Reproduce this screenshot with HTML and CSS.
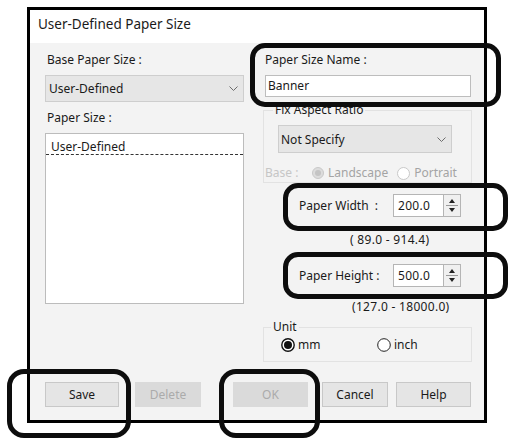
FILE: index.html
```html
<!DOCTYPE html>
<html>
    <head>
        <meta charset="UTF-8">
        <title>User-Defined Paper Size</title>
        <link rel="stylesheet" href="styles.css">
    </head>
    <body>
        <div class="page">
            <div class="dialog">
                <div class="titlebar">User-Defined Paper Size</div>
                <div class="content">
                    <div class="col-left">
                        <div class="label">Base Paper Size :</div>
                        <div class="select select-base">
                            <span>User-Defined</span>
                            <svg class="chevron" width="9" height="5" viewBox="0 0 9 5"><polyline points="0.5,0.5 4.5,4.5 8.5,0.5" fill="none" stroke="#6d6d6d" stroke-width="1"/></svg>
                        </div>
                        <div class="label label-gap">Paper Size :</div>
                        <div class="listbox">
                            <div class="list-item">User-Defined</div>
                        </div>
                    </div>
                    <div class="col-right">
                        <div class="label indent">Paper Size Name :</div>
                        <div class="textbox">Banner</div>
                        <div class="group group-aspect">
                            <div class="group-title">Fix Aspect Ratio</div>
                            <div class="select select-aspect">
                                <span>Not Specify</span>
                                <svg class="chevron" width="9" height="5" viewBox="0 0 9 5"><polyline points="0.5,0.5 4.5,4.5 8.5,0.5" fill="none" stroke="#6d6d6d" stroke-width="1"/></svg>
                            </div>
                            <div class="base-row">
                                <span class="base-label">Base :</span>
                                <span class="radio-opt opt-landscape">
                                    <svg width="12" height="12" viewBox="0 0 12 12"><circle cx="6" cy="6" r="5.5" fill="#dcdcdc" stroke="#c8c8c8"/><circle cx="6" cy="6" r="3" fill="#c4c4c4"/></svg>
                                    Landscape
                                </span>
                                <span class="radio-opt">
                                    <svg width="13" height="13" viewBox="0 0 13 13"><circle cx="6.5" cy="6.5" r="6" fill="#fff" stroke="#c8c8c8"/></svg>
                                    Portrait
                                </span>
                            </div>
                        </div>
                        <div class="size-row size-width">
                            <span class="size-label">Paper Width&nbsp; :</span>
                            <span class="spin-value">200.0</span>
                            <span class="spin-btn">
                                <svg width="18" height="23" viewBox="0 0 18 23"><polygon points="6,9 12,9 9,5" fill="#222"/><line x1="3" y1="11.5" x2="15" y2="11.5" stroke="#9a9a9a"/><polygon points="6,14 12,14 9,18" fill="#222"/></svg>
                            </span>
                        </div>
                        <div class="range range-width">( 89.0 - 914.4)</div>
                        <div class="size-row size-height">
                            <span class="size-label">Paper Height :</span>
                            <span class="spin-value">500.0</span>
                            <span class="spin-btn">
                                <svg width="18" height="23" viewBox="0 0 18 23"><polygon points="6,9 12,9 9,5" fill="#222"/><line x1="3" y1="11.5" x2="15" y2="11.5" stroke="#9a9a9a"/><polygon points="6,14 12,14 9,18" fill="#222"/></svg>
                            </span>
                        </div>
                        <div class="range range-height">(127.0 - 18000.0)</div>
                        <div class="group group-unit">
                            <div class="group-title">Unit</div>
                            <div class="unit-row">
                                <span class="radio-opt unit-mm">
                                    <svg width="14" height="14" viewBox="0 0 14 14"><circle cx="7" cy="7" r="6.2" fill="#fff" stroke="#111" stroke-width="1.4"/><circle cx="7" cy="7" r="4" fill="#111"/></svg>
                                    mm
                                </span>
                                <span class="radio-opt unit-inch">
                                    <svg width="14" height="14" viewBox="0 0 14 14"><circle cx="7" cy="7" r="6.3" fill="#fff" stroke="#222" stroke-width="1"/></svg>
                                    inch
                                </span>
                            </div>
                        </div>
                    </div>
                </div>
                <div class="buttons">
                    <span class="btn btn-save">Save</span>
                    <span class="btn btn-delete disabled">Delete</span>
                    <span class="btn btn-ok disabled">OK</span>
                    <span class="btn btn-cancel">Cancel</span>
                    <span class="btn btn-help">Help</span>
                </div>
            </div>
            <div class="mark mark-name"></div>
            <div class="mark mark-width"></div>
            <div class="mark mark-height"></div>
            <div class="mark mark-save"></div>
            <div class="mark mark-ok"></div>
        </div>
    </body>
</html>
```

FILE: styles.css
```css
body {
    margin : 0;
    background : #fff;
    font-family : "Noto Sans", "Open Sans", sans-serif;
    font-size : 12px;
    color : #1a1a1a;
}
.page {
    position : relative;
    width : 509px;
    height : 443px;
    padding : 7px 0 0 27px;
    box-sizing : border-box;
}
.dialog {
    width : 454px;
    height : 410px;
    border : 3px solid #000;
    background : #f3f3f3;
}
.titlebar {
    height : 33px;
    line-height : 29px;
    padding-left : 8px;
    background : #fff;
    font-size : 13.5px;
}
.content {
    display : grid;
    grid-template-columns : 199px 209px;
    column-gap : 19px;
    padding-left : 15px;
    align-items : start;
}
.label {
    line-height : 16px;
    margin-top : 9px;
    padding-left : 2px;
}
.label-gap {
    margin-top : 8px;
}
.select {
    display : flex;
    align-items : center;
    justify-content : space-between;
    box-sizing : border-box;
    border : 1px solid #cecece;
    background : #e6e6e6;
    padding : 0 5px 0 3px;
}
.select-base {
    height : 27px;
    margin-top : 7px;
}
.listbox {
    margin-top : 7px;
    height : 171px;
    box-sizing : border-box;
    border : 1px solid #bcbcbc;
    background : #fff;
}
.list-item {
    padding : 5px 5px 0 5px;
    line-height : 15px;
    border-bottom : 1px dashed #333;
}
.textbox {
    margin : 7px 0 0 2px;
    width : 206px;
    height : 22px;
    box-sizing : border-box;
    border : 1px solid #bdbdbd;
    background : #fff;
    line-height : 20px;
    padding-left : 2px;
}
.group {
    border : 1px solid #e2e2e2;
}
.group-title {
    width : fit-content;
    margin-top : -9px;
    padding : 0 2px;
    line-height : 16px;
    background : #f3f3f3;
}
.group-aspect {
    margin-top : 13px;
    padding : 0 0 1px 14px;
}
.group-aspect .group-title {
    margin-left : -5px;
}
.select-aspect {
    margin-top : 7px;
    width : 174px;
    height : 28px;
    padding-left : 2px;
}
.base-row {
    display : flex;
    align-items : center;
    margin : 12px 0 0 -13px;
    line-height : 16px;
    color : #a4a4a4;
}
.base-label {
    color : #c6c6c6;
    width : 47px;
}
.radio-opt {
    display : inline-flex;
    align-items : center;
    gap : 4px;
}
.opt-landscape {
    margin-right : 9px;
}
.size-row {
    display : flex;
    align-items : center;
    padding-left : 36px;
    height : 23px;
}
.size-width {
    margin-top : 11px;
}
.size-height {
    margin-top : 16px;
}
.size-label {
    width : 94px;
}
.spin-value {
    width : 50px;
    height : 23px;
    box-sizing : border-box;
    border : 1px solid #b5b5b5;
    border-right : none;
    background : #fff;
    line-height : 21px;
    padding-left : 4px;
    letter-spacing : 0.3px;
}
.spin-btn {
    width : 18px;
    height : 23px;
    box-sizing : border-box;
    border : 1px solid #b5b5b5;
    background : #f0f0f0;
    display : flex;
}
.spin-btn svg {
    margin : -1px;
}
.range {
    line-height : 16px;
    letter-spacing : 0.3px;
}
.range-width {
    margin-top : 15px;
    padding-left : 87px;
}
.range-height {
    margin-top : 12px;
    padding-left : 89px;
}
.group-unit {
    margin-top : 12px;
    padding : 0 0 8px 17px;
}
.group-unit .group-title {
    margin-left : -10px;
}
.unit-row {
    display : flex;
    align-items : center;
    margin-top : 2px;
    line-height : 16px;
}
.unit-row .radio-opt {
    gap : 3px;
}
.unit-mm {
    width : 96px;
}
.buttons {
    display : flex;
    margin-top : 20px;
    padding-left : 15px;
}
.btn {
    height : 25px;
    box-sizing : border-box;
    border : 1px solid #c8c8c8;
    background : #e5e5e5;
    line-height : 23px;
    text-align : center;
}
.disabled {
    border-color : #dadada;
    background : #dadada;
    color : #ababab;
}
.btn-save {
    width : 74px;
}
.btn-delete {
    width : 66px;
    margin-left : 16px;
}
.btn-ok {
    width : 75px;
    margin-left : 32px;
}
.btn-cancel {
    width : 66px;
    margin-left : 14px;
}
.btn-help {
    width : 75px;
    margin-left : 8px;
}
.mark {
    position : absolute;
    box-sizing : border-box;
    border : 5px solid #0d0d0d;
    border-radius : 15px;
}
.mark-name {
    left : 250px;
    top : 43px;
    width : 251px;
    height : 64px;
}
.mark-width {
    left : 283px;
    top : 183px;
    width : 225px;
    height : 48px;
}
.mark-height {
    left : 283px;
    top : 252px;
    width : 225px;
    height : 47px;
}
.mark-save {
    left : 7px;
    top : 369px;
    width : 124px;
    height : 69px;
    border-radius : 17px;
}
.mark-ok {
    left : 219px;
    top : 369px;
    width : 101px;
    height : 69px;
    border-radius : 17px;
}
```
